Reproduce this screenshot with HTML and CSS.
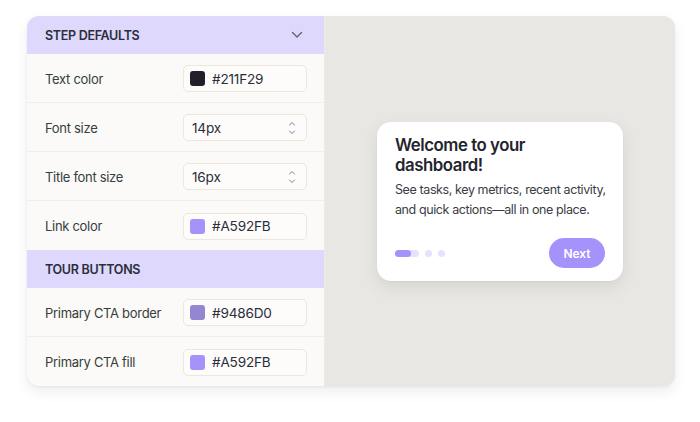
FILE: index.html
```html
<!DOCTYPE html>
<html>
<head>
<meta charset="utf-8">
<link rel="stylesheet" href="styles.css">
</head>
<body>
<div class="frame">
  <div class="panel">
    <div class="section-head">
      <span>STEP DEFAULTS</span>
      <svg class="chev" width="12" height="8" viewBox="0 0 12 8"><path d="M1.5 1.5 L6 6 L10.5 1.5" fill="none" stroke="#5f6372" stroke-width="1.4" stroke-linecap="round" stroke-linejoin="round"/></svg>
    </div>
    <div class="row">
      <span class="label">Text color</span>
      <div class="field"><span class="swatch" style="background:#211F29"></span><span>#211F29</span></div>
    </div>
    <div class="row">
      <span class="label">Font size</span>
      <div class="field"><span class="val">14px</span>
        <svg class="spin" width="8" height="14" viewBox="0 0 8 14"><path d="M1.5 4 L4 1.5 L6.5 4 M1.5 10 L4 12.5 L6.5 10" fill="none" stroke="#7a7d86" stroke-width="1" stroke-linecap="round" stroke-linejoin="round"/></svg>
      </div>
    </div>
    <div class="row">
      <span class="label">Title font size</span>
      <div class="field"><span class="val">16px</span>
        <svg class="spin" width="8" height="14" viewBox="0 0 8 14"><path d="M1.5 4 L4 1.5 L6.5 4 M1.5 10 L4 12.5 L6.5 10" fill="none" stroke="#7a7d86" stroke-width="1" stroke-linecap="round" stroke-linejoin="round"/></svg>
      </div>
    </div>
    <div class="row last">
      <span class="label">Link color</span>
      <div class="field"><span class="swatch" style="background:#A592FB"></span><span>#A592FB</span></div>
    </div>
    <div class="section-head">
      <span>TOUR BUTTONS</span>
    </div>
    <div class="row">
      <span class="label">Primary CTA border</span>
      <div class="field"><span class="swatch" style="background:#9486D0"></span><span>#9486D0</span></div>
    </div>
    <div class="row last">
      <span class="label">Primary CTA fill</span>
      <div class="field"><span class="swatch" style="background:#A592FB"></span><span>#A592FB</span></div>
    </div>
  </div>
  <div class="preview">
    <div class="card">
      <h2 class="title">Welcome to your dashboard!</h2>
      <p class="body">See tasks, key metrics, recent activity, and quick actions—all in one place.</p>
      <div class="foot">
        <div class="dots">
          <span class="track"><span class="fill"></span></span>
          <span class="dot"></span>
          <span class="dot"></span>
        </div>
        <button class="next">Next</button>
      </div>
    </div>
  </div>
</div>
</body>
</html>
```
FILE: styles.css
```css
* { box-sizing: border-box; }
html, body { margin: 0; padding: 0; background: #ffffff; }
body {
  width: 700px;
  height: 422px;
  padding: 16px 25px 0 27px;
  font-family: Inter, "Noto Sans", sans-serif;
  overflow: hidden;
}
.frame {
  width: 648px;
  height: 370px;
  display: flex;
  border-radius: 12px;
  overflow: hidden;
  background: #e8e7e3;
  box-shadow: 0 6px 14px rgba(0,0,0,0.07), 0 1px 3px rgba(0,0,0,0.05);
}
.panel {
  width: 298px;
  background: #fbfaf8;
  display: flex;
  flex-direction: column;
  border-right: 1px solid #ecebe6;
}
.section-head {
  height: 38px;
  flex: none;
  background: #ddd8fc;
  display: flex;
  align-items: center;
  justify-content: space-between;
  padding: 0 21px 0 18px;
  font-size: 12.5px;
  font-weight: 600;
  color: #2b2e3b;
  letter-spacing: -0.3px;
}
.chev { display: block; }
.row {
  height: 49px;
  flex: none;
  display: flex;
  align-items: center;
  justify-content: space-between;
  padding: 1px 17px 0 18px;
  border-bottom: 1px solid #efeee9;
}
.row.last { border-bottom: none; }
.label {
  font-size: 13px;
  color: #35403a;
  letter-spacing: -0.3px;
}
.field {
  width: 124px;
  height: 27px;
  border: 1px solid #ebe7d9;
  border-radius: 5px;
  background: #fdfcfa;
  display: flex;
  align-items: center;
  padding: 0 10px 0 6px;
  gap: 7px;
  font-size: 13.6px;
  color: #2b2e3b;
  letter-spacing: -0.2px;
}
.field .spin { margin-left: auto; }
.field .val { padding-left: 2px; }
.swatch {
  width: 15px;
  height: 15px;
  border-radius: 3px;
  flex: none;
}
.preview {
  flex: 1;
  display: flex;
  align-items: center;
  justify-content: center;
}
.card {
  width: 246px;
  height: 159px;
  margin-top: 1px;
  background: #ffffff;
  border-radius: 14px;
  box-shadow: 0 6px 18px rgba(0,0,0,0.08), 0 1px 3px rgba(0,0,0,0.05);
  padding: 13px 8px 13px 18px;
  display: flex;
  flex-direction: column;
}
.title {
  margin: 0;
  font-size: 16.8px;
  line-height: 20px;
  font-weight: 600;
  color: #24242c;
  letter-spacing: -0.45px;
}
.body {
  margin: 5px 0 0 0;
  font-size: 12.5px;
  line-height: 20px;
  color: #3a3d44;
  letter-spacing: -0.4px;
}
.foot {
  margin-top: auto;
  display: flex;
  align-items: center;
  justify-content: space-between;
  padding-right: 10px;
}
.dots { display: flex; align-items: center; gap: 6px; }
.track {
  width: 24px;
  height: 7px;
  border-radius: 4px;
  background: #e6e1fd;
  display: block;
}
.fill {
  display: block;
  width: 16px;
  height: 7px;
  border-radius: 4px;
  background: #a592fb;
}
.dot {
  width: 7px;
  height: 7px;
  border-radius: 50%;
  background: #e6e1fd;
}
.next {
  width: 56px;
  height: 30px;
  border: none;
  border-radius: 15px;
  background: #a592fb;
  color: #ffffff;
  font-family: Inter, "Noto Sans", sans-serif;
  font-size: 12px;
  font-weight: 600;
}
```
